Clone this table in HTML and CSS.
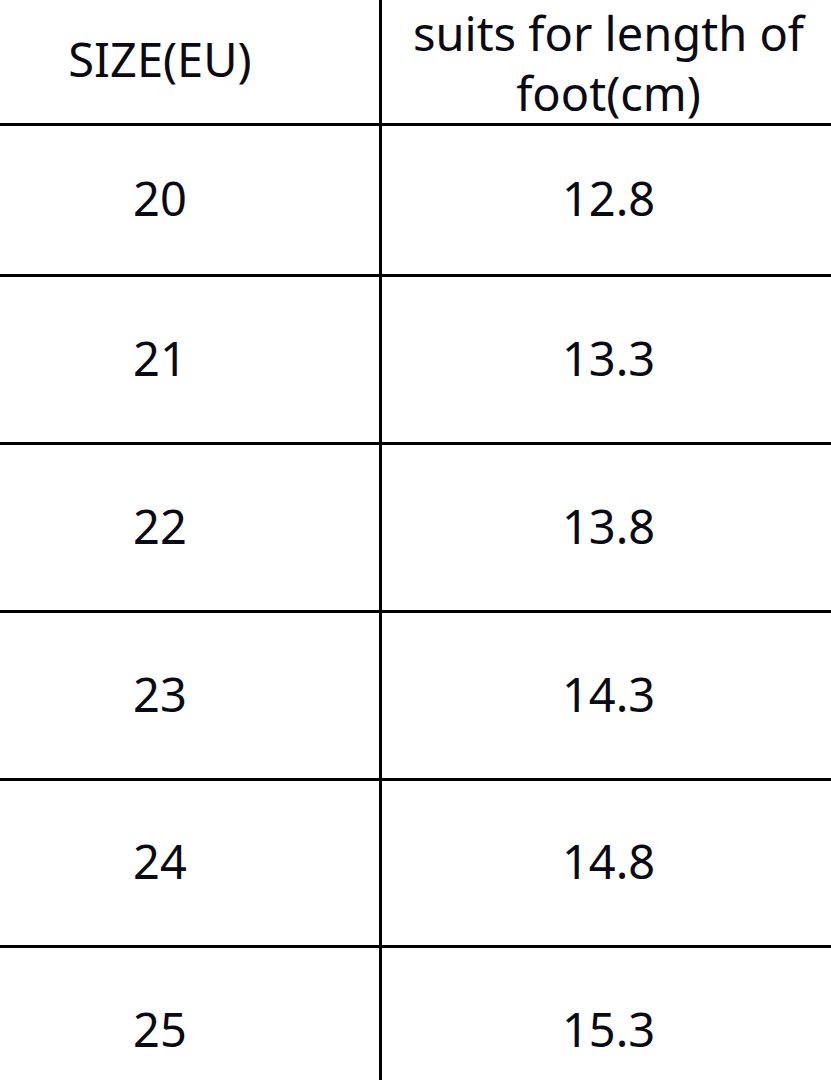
FILE: index.html
```html
<!DOCTYPE html>
<html lang="en">
<head>
<meta charset="utf-8">
<title>Size chart</title>
<link rel="stylesheet" href="styles.css">
</head>
<body>
<div class="chart">
  <div class="cell head left">SIZE(EU)</div>
  <div class="cell head right">suits for length of<br>foot(cm)</div>

  <div class="cell r1 left">20</div>
  <div class="cell r1 right">12.8</div>

  <div class="cell r left">21</div>
  <div class="cell r right">13.3</div>

  <div class="cell r left">22</div>
  <div class="cell r right">13.8</div>

  <div class="cell r left">23</div>
  <div class="cell r right">14.3</div>

  <div class="cell r5 left">24</div>
  <div class="cell r5 right">14.8</div>

  <div class="cell r6 left">25</div>
  <div class="cell r6 right">15.3</div>
</div>
</body>
</html>
```

FILE: styles.css
```css
html, body {
  margin: 0;
  padding: 0;
  background: #ffffff;
  overflow: hidden;
}

body {
  width: 831px;
  height: 1080px;
  font-family: "Noto Sans", "DejaVu Sans", sans-serif;
  color: #0a0a14;
}

.chart {
  display: grid;
  grid-template-columns: 441px 449px;
  margin-left: -59px;
}

.cell {
  display: flex;
  align-items: center;
  justify-content: center;
  text-align: center;
  font-size: 47px;
  padding-bottom: 4px;
  border-bottom: 3px solid #000;
  box-sizing: border-box;
}

.cell.left {
  border-right: 3px solid #000;
}

.cell.right {
  padding-left: 4px;
}

.head {
  height: 126px;
  line-height: 61px;
}

.head.right {
  line-height: 60px;
  padding-top: 2px;
  padding-bottom: 0;
}

.r1 {
  height: 151px;
}

.r {
  height: 168px;
}

.r5 {
  height: 167px;
}

.r6 {
  height: 166px;
  border-bottom: none;
}
```
